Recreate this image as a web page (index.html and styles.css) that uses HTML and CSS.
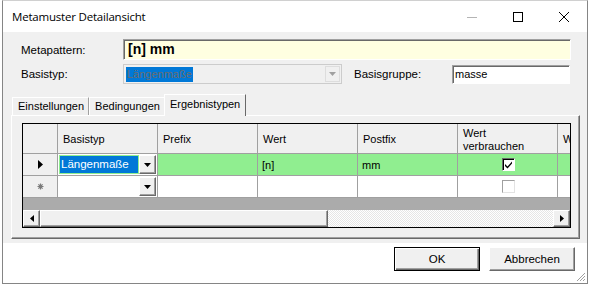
FILE: index.html
```html
<!DOCTYPE html>
<html lang="de">
<head>
    <meta charset="UTF-8">
    <title>Metamuster Detailansicht</title>
    <link rel="stylesheet" href="styles.css">
</head>
<body>
    <div class="window">
        <div class="titlebar">
            <span class="title">Metamuster Detailansicht</span>
            <div class="controls">
                <span class="ctl">
                    <svg width="10" height="10" viewBox="0 0 10 10"><path d="M0 5.5H10" stroke="#b4b4b4" stroke-width="1"/></svg>
                </span>
                <span class="ctl">
                    <svg width="10" height="10" viewBox="0 0 10 10"><rect x="0.5" y="0.5" width="9" height="9" fill="none" stroke="#000" stroke-width="1"/></svg>
                </span>
                <span class="ctl">
                    <svg width="10" height="10" viewBox="0 0 10 10"><path d="M0 0L10 10M10 0L0 10" stroke="#000" stroke-width="1"/></svg>
                </span>
            </div>
        </div>

        <div class="content">
            <div class="form-row first">
                <span class="label">Metapattern:</span>
                <div class="field pattern">[n] mm</div>
            </div>
            <div class="form-row">
                <span class="label">Basistyp:</span>
                <div class="combo disabled">
                    <span class="combo-text"><span class="hl">Längenmaße</span></span>
                    <span class="drop"><svg width="7" height="4" viewBox="0 0 7 4"><path d="M0 0H7L3.5 4Z" fill="#a0a0a0"/></svg></span>
                </div>
                <span class="label group-label">Basisgruppe:</span>
                <div class="field group">masse</div>
            </div>

            <div class="tabs">
                <div class="tab">Einstellungen</div>
                <div class="tab">Bedingungen</div>
                <div class="tab active">Ergebnistypen</div>
            </div>
            <div class="tab-panel">
                <div class="grid">
                    <div class="grid-rows">
                        <div class="row head">
                            <div class="cell rowhead"></div>
                            <div class="cell">Basistyp</div>
                            <div class="cell">Prefix</div>
                            <div class="cell">Wert</div>
                            <div class="cell">Postfix</div>
                            <div class="cell">Wert<br>verbrauchen</div>
                            <div class="cell">Wert</div>
                        </div>
                        <div class="row data current">
                            <div class="cell rowhead">
                                <svg width="5" height="9" viewBox="0 0 5 9"><path d="M0 0L5 4.5L0 9Z" fill="#000"/></svg>
                            </div>
                            <div class="cell edit">
                                <div class="cell-combo">
                                    <span class="cell-combo-text">Längenmaße</span>
                                    <span class="cell-drop"><svg width="7" height="4" viewBox="0 0 7 4"><path d="M0 0H7L3.5 4Z" fill="#000"/></svg></span>
                                </div>
                            </div>
                            <div class="cell"></div>
                            <div class="cell">[n]</div>
                            <div class="cell">mm</div>
                            <div class="cell center"><span class="check checked"><svg width="9" height="9" viewBox="0 0 9 9"><path d="M1 4L3.5 6.5L8 1.5V3.5L3.5 8.5L1 6Z" fill="#000"/></svg></span></div>
                            <div class="cell"></div>
                        </div>
                        <div class="row data">
                            <div class="cell rowhead">
                                <svg width="7" height="7" viewBox="0 0 7 7"><path d="M3.5 0.5V6.5M0.5 3.5H6.5M1.4 1.4L5.6 5.6M5.6 1.4L1.4 5.6" stroke="#7a7a7a" stroke-width="1.2"/></svg>
                            </div>
                            <div class="cell edit">
                                <div class="cell-combo blank">
                                    <span class="cell-combo-text"></span>
                                    <span class="cell-drop"><svg width="7" height="4" viewBox="0 0 7 4"><path d="M0 0H7L3.5 4Z" fill="#000"/></svg></span>
                                </div>
                            </div>
                            <div class="cell"></div>
                            <div class="cell"></div>
                            <div class="cell"></div>
                            <div class="cell center"><span class="check off"></span></div>
                            <div class="cell"></div>
                        </div>
                    </div>
                    <div class="hscroll">
                        <span class="sb-btn"><svg width="4" height="7" viewBox="0 0 4 7"><path d="M4 0V7L0 3.5Z" fill="#000"/></svg></span>
                        <span class="sb-thumb"></span>
                        <span class="sb-track"></span>
                        <span class="sb-btn"><svg width="4" height="7" viewBox="0 0 4 7"><path d="M0 0V7L4 3.5Z" fill="#000"/></svg></span>
                    </div>
                </div>
            </div>
        </div>

        <div class="footer">
            <button class="btn default">OK</button>
            <button class="btn">Abbrechen</button>
            <svg class="grip" width="11" height="11" viewBox="0 0 11 11">
                <path d="M10 2L2 10M10 5L5 10M10 8L8 10" stroke="#a0a0a0" stroke-width="1"/>
            </svg>
        </div>
    </div>
</body>
</html>
```

FILE: styles.css
```css
body {
    margin: 0;
    background-color: #ffffff;
    font-family: 'Liberation Sans', Arial, sans-serif;
    font-size: 11px;
    color: #000000;
}

.window {
    position: relative;
    margin-left: 2px;
    width: 586px;
    height: 284px;
    box-sizing: border-box;
    border: 1px solid #858585;
    border-top-color: #d0d0d0;
    background-color: #ffffff;
}

.titlebar {
    height: 31px;
    display: flex;
    align-items: center;
    justify-content: space-between;
    background-color: #ffffff;
}

.title {
    padding-left: 9px;
    font-family: 'Open Sans', 'Noto Sans', sans-serif;
    font-size: 11.5px;
    letter-spacing: -0.2px;
}

.controls {
    display: flex;
    align-self: stretch;
}

.ctl {
    width: 46px;
    display: flex;
    align-items: center;
    justify-content: center;
}

.content {
    height: 211px;
    box-sizing: border-box;
    background-color: #f0f0f0;
    padding: 7px 7px 0 8px;
}

.form-row {
    display: flex;
    align-items: center;
    padding-left: 10px;
    padding-right: 9px;
    margin-top: 4px;
}

.form-row.first {
    margin-top: 0;
}

.label {
    width: 102px;
    flex-shrink: 0;
    font-size: 11.5px;
}

.field {
    box-sizing: border-box;
    border: 1px solid #ffffff;
    border-top-color: #a0a0a0;
    border-left-color: #a0a0a0;
    box-shadow: inset 1px 1px 0 #696969;
    background-color: #ffffff;
}

.pattern {
    flex: 1;
    height: 21px;
    padding: 0 4px;
    background-color: #ffffe1;
    font-size: 14px;
    font-weight: bold;
    line-height: 19px;
}

.combo {
    width: 219px;
    height: 20px;
    box-sizing: border-box;
    border: 1px solid #cccccc;
    background-color: #f0f0f0;
    display: flex;
    align-items: stretch;
    padding: 1px;
}

.combo-text {
    flex: 1;
    display: flex;
    align-items: center;
}

.hl {
    background-color: #0078d7;
    color: #6d6d6d;
    font-size: 11px;
    line-height: 15px;
    padding: 0 1px;
    margin-left: 1px;
}

.drop {
    width: 15px;
    display: flex;
    align-items: center;
    justify-content: center;
    border: 1px solid #dddddd;
    box-sizing: border-box;
    background-color: #f0f0f0;
}

.group-label {
    width: 98px;
    margin-left: 12px;
}

.group {
    width: 118px;
    height: 19px;
    padding: 0 2px;
    font-size: 11px;
    line-height: 17px;
}

.tabs {
    display: flex;
    align-items: flex-end;
    height: 22px;
    margin-top: 9px;
    padding-left: 1px;
}

.tab {
    height: 18px;
    box-sizing: border-box;
    padding: 0 4px 0 5px;
    border-top: 1px solid #ffffff;
    border-left: 1px solid #ffffff;
    border-right: 1px solid #a0a0a0;
    line-height: 17px;
    font-size: 11px;
}

.tab.active {
    position: relative;
    height: 22px;
    margin-left: -1px;
    margin-bottom: -1px;
    padding: 0 5px 0 5px;
    background-color: #f0f0f0;
    border-right-color: #696969;
    line-height: 19px;
    z-index: 1;
}

.tab-panel {
    height: 124px;
    box-sizing: border-box;
    border: 1px solid #ffffff;
    border-right-color: #696969;
    border-bottom-color: #696969;
    box-shadow: inset -1px -1px 0 #a0a0a0;
    padding: 7px 8px 0 10px;
}

.grid {
    height: 105px;
    box-sizing: border-box;
    border: 1px solid #000000;
    background-color: #ababab;
    display: flex;
    flex-direction: column;
    overflow: hidden;
}

.grid-rows {
    flex: 1;
    overflow: hidden;
}

.row {
    display: grid;
    grid-template-columns: 35px repeat(6, 100px);
}

.row.head {
    height: 30px;
}

.row.data {
    height: 22px;
}

.cell {
    box-sizing: border-box;
    border-right: 1px solid #a0a0a0;
    border-bottom: 1px solid #a0a0a0;
    display: flex;
    align-items: center;
    padding-left: 4px;
    font-size: 11px;
    background-color: #ffffff;
    white-space: nowrap;
    overflow: hidden;
}

.head .cell {
    background-color: #f0f0f0;
    font-size: 11px;
    line-height: 13px;
    padding-left: 5px;
    padding-top: 2px;
}

.cell.rowhead {
    background-color: #f0f0f0;
    justify-content: center;
    padding-left: 0;
}

.current .cell {
    background-color: #90ee90;
}

.current .cell.rowhead {
    background-color: #f0f0f0;
}

.cell.edit {
    padding: 1px;
    background-color: #ffffff;
}

.current .cell.edit {
    background-color: #ffffff;
}

.cell.center {
    justify-content: center;
    padding-left: 0;
}

.cell-combo {
    flex: 1;
    height: 19px;
    display: flex;
}

.cell-combo-text {
    flex: 1;
    background-color: #0078d7;
    color: #ffffff;
    border: 1px solid #90ee90;
    font-size: 11.5px;
    line-height: 17px;
    padding-left: 1px;
}

.cell-combo.blank .cell-combo-text {
    background-color: #ffffff;
    border-color: #ffffff;
}

.cell-drop {
    width: 17px;
    box-sizing: border-box;
    border: 1px solid #ffffff;
    border-right-color: #696969;
    border-bottom-color: #696969;
    box-shadow: inset -1px -1px 0 #a0a0a0;
    background-color: #f0f0f0;
    display: flex;
    align-items: center;
    justify-content: center;
}

.check {
    width: 13px;
    height: 13px;
    box-sizing: border-box;
    display: flex;
    align-items: center;
    justify-content: center;
    background-color: #ffffff;
    margin-left: 2px;
}

.check.checked {
    border: 1px solid #ffffff;
    border-top-color: #696969;
    border-left-color: #696969;
    box-shadow: inset 1px 1px 0 #000000;
}

.check.off {
    border: 1px solid #e3e3e3;
    border-top-color: #a0a0a0;
    border-left-color: #a0a0a0;
}

.hscroll {
    height: 17px;
    display: flex;
    margin-top: 12px;
}

.sb-btn {
    width: 17px;
    box-sizing: border-box;
    border: 1px solid #ffffff;
    border-right-color: #696969;
    border-bottom-color: #696969;
    box-shadow: inset -1px -1px 0 #a0a0a0;
    background-color: #f0f0f0;
    display: flex;
    align-items: center;
    justify-content: center;
}

.sb-thumb {
    width: 288px;
    box-sizing: border-box;
    border: 1px solid #ffffff;
    border-right-color: #696969;
    border-bottom-color: #696969;
    box-shadow: inset -1px -1px 0 #a0a0a0;
    background-color: #f0f0f0;
}

.sb-track {
    flex: 1;
    background-color: #f4f4f4;
    background-image: repeating-conic-gradient(#ffffff 0 25%, #e6e6e6 0 50%);
    background-size: 2px 2px;
}

.footer {
    height: 40px;
    display: flex;
    align-items: flex-start;
    justify-content: flex-end;
    gap: 9px;
    padding: 4px 12px 0 0;
    box-sizing: border-box;
    position: relative;
}

.btn {
    width: 86px;
    height: 24px;
    box-sizing: border-box;
    border: 1px solid #ffffff;
    border-right-color: #696969;
    border-bottom-color: #696969;
    box-shadow: inset -1px -1px 0 #a0a0a0;
    background-color: #f0f0f0;
    font-family: 'Liberation Sans', Arial, sans-serif;
    font-size: 11.5px;
    padding: 0;
    color: #000000;
}

.btn.default {
    border: 1px solid #000000;
    box-shadow: inset 1px 1px 0 #ffffff, inset -1px -1px 0 #696969, inset -2px -2px 0 #a0a0a0;
}

.grip {
    position: absolute;
    right: 1px;
    bottom: 1px;
}
```
